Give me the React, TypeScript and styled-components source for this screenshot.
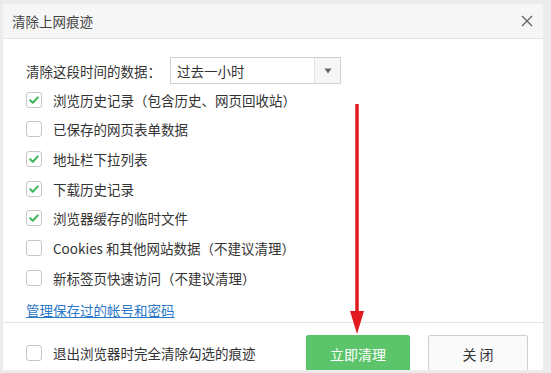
import React, { useState } from 'react';
import styled, { createGlobalStyle } from 'styled-components';

const GlobalStyle = createGlobalStyle`
    html, body {
        margin: 0;
        padding: 0;
        background: #ececec;
    }
    body {
        font-family: 'Noto Sans CJK SC', 'Noto Sans', sans-serif;
        color: #333;
    }
`;

interface Option {
    id: string;
    label: string;
    checked: boolean;
}

const initialOptions: Option[] = [
    { id: 'history', label: '浏览历史记录（包含历史、网页回收站）', checked: true },
    { id: 'forms', label: '已保存的网页表单数据', checked: false },
    { id: 'address', label: '地址栏下拉列表', checked: true },
    { id: 'downloads', label: '下载历史记录', checked: true },
    { id: 'cache', label: '浏览器缓存的临时文件', checked: true },
    { id: 'cookies', label: 'Cookies 和其他网站数据（不建议清理）', checked: false },
    { id: 'newtab', label: '新标签页快速访问（不建议清理）', checked: false },
];

function CheckBox({ checked, onClick }: { checked: boolean; onClick: () => void }) {
    return (
        <Box onClick={onClick}>
            {checked && (
                <svg width="12" height="12" viewBox="0 0 12 12">
                    <path d="M2.2 6.2 L4.8 8.7 L9.8 3.4" fill="none" stroke="#3db55a" strokeWidth="2" strokeLinecap="round" strokeLinejoin="round" />
                </svg>
            )}
        </Box>
    );
}

export default function App() {
    const [options, setOptions] = useState<Option[]>(initialOptions);
    const [clearOnExit, setClearOnExit] = useState(false);

    const toggle = (id: string) => {
        setOptions(options.map((o) => (o.id === id ? { ...o, checked: !o.checked } : o)));
    };

    return (
        <Page>
            <GlobalStyle />
            <Dialog>
                <TitleBar>
                    <Title>清除上网痕迹</Title>
                    <CloseIcon width="12" height="12" viewBox="0 0 12 12">
                        <path d="M1 1 L11 11 M11 1 L1 11" stroke="#666" strokeWidth="1.4" />
                    </CloseIcon>
                </TitleBar>
                <Body>
                    <RangeRow>
                        <RangeLabel>清除这段时间的数据：</RangeLabel>
                        <Select>
                            <SelectValue>过去一小时</SelectValue>
                            <SelectArrow>
                                <svg width="8" height="6" viewBox="0 0 8 6">
                                    <path d="M0.5 0.5 L7.5 0.5 L4 5.5 Z" fill="#666" />
                                </svg>
                            </SelectArrow>
                        </Select>
                    </RangeRow>
                    <OptionList>
                        {options.map((o) => (
                            <OptionRow key={o.id}>
                                <CheckBox checked={o.checked} onClick={() => toggle(o.id)} />
                                <OptionLabel>{o.label}</OptionLabel>
                            </OptionRow>
                        ))}
                    </OptionList>
                    <ManageLink>管理保存过的帐号和密码</ManageLink>
                </Body>
                <Footer>
                    <ExitRow>
                        <CheckBox checked={clearOnExit} onClick={() => setClearOnExit(!clearOnExit)} />
                        <OptionLabel>退出浏览器时完全清除勾选的痕迹</OptionLabel>
                    </ExitRow>
                    <Buttons>
                        <Button primary>立即清理</Button>
                        <Button>关 闭</Button>
                    </Buttons>
                </Footer>
            </Dialog>
            <Arrow width="16" height="234" viewBox="0 0 16 234">
                <line x1="8" y1="2" x2="8" y2="212" stroke="#e11b1f" strokeWidth="3.5" />
                <polygon points="1,209 15,209 8,232" fill="#e11b1f" />
            </Arrow>
        </Page>
    );
}

const Page = styled.div`
    position: relative;
    width: 551px;
    height: 373px;
    padding: 4px 0 0 3px;
    box-sizing: border-box;
    overflow: hidden;
`;

const Dialog = styled.div`
    width: 540px;
    height: 366px;
    background: #fff;
    display: flex;
    flex-direction: column;
    overflow: hidden;
`;

const TitleBar = styled.div`
    height: 34px;
    flex: none;
    display: flex;
    align-items: center;
    justify-content: space-between;
    padding: 0 10px 0 9px;
    background: #f6f6f6;
    border-bottom: 1px solid #e4e4e4;
`;

const Title = styled.div`
    font-size: 13.5px;
    color: #444;
`;

const CloseIcon = styled.svg`
    display: block;
`;

const Body = styled.div`
    padding: 18px 0 0 23px;
    display: flex;
    flex-direction: column;
    border-bottom: 1px solid #e4e4e4;
`;

const RangeRow = styled.div`
    display: flex;
    align-items: center;
    height: 27px;
`;

const RangeLabel = styled.div`
    font-size: 13.5px;
    width: 144px;
    white-space: nowrap;
`;

const Select = styled.div`
    width: 171px;
    height: 27px;
    box-sizing: border-box;
    border: 1px solid #d0d0d0;
    display: flex;
    align-items: stretch;
`;

const SelectValue = styled.div`
    flex: 1;
    display: flex;
    align-items: center;
    padding-left: 6px;
    font-size: 13.5px;
`;

const SelectArrow = styled.div`
    width: 25px;
    display: flex;
    align-items: center;
    justify-content: center;
    background: #f6f6f6;
    border-left: 1px solid #e2e2e2;
`;

const OptionList = styled.div`
    display: flex;
    flex-direction: column;
    margin-top: 1px;
`;

const OptionRow = styled.div`
    display: flex;
    align-items: center;
    height: 29.67px;
    gap: 11px;
`;

const Box = styled.div`
    width: 16px;
    height: 16px;
    box-sizing: border-box;
    border: 1px solid #c6c6c6;
    border-radius: 3px;
    background: #fff;
    display: flex;
    align-items: center;
    justify-content: center;
    flex: none;
`;

const OptionLabel = styled.div`
    font-size: 13.5px;
    white-space: nowrap;
    color: #333;
`;

const ManageLink = styled.a`
    font-size: 13.5px;
    color: #2a78c8;
    text-decoration: underline;
    line-height: 20px;
    margin-top: 7px;
    margin-bottom: 2px;
    align-self: flex-start;
    cursor: pointer;
`;

const Footer = styled.div`
    flex: 1;
    display: flex;
    justify-content: space-between;
    align-items: flex-start;
    padding: 0 15px 0 23px;
`;

const ExitRow = styled.div`
    display: flex;
    align-items: center;
    gap: 11px;
    height: 30px;
    margin-top: 15px;
`;

const Buttons = styled.div`
    display: flex;
    gap: 18px;
    margin-top: 12px;
`;

const Button = styled.button<{ primary?: boolean }>`
    width: ${(p) => (p.primary ? '104px' : '100px')};
    height: 38px;
    border-radius: 2px;
    font-family: 'Noto Sans CJK SC', sans-serif;
    font-size: 14px;
    cursor: pointer;
    border: 1px solid ${(p) => (p.primary ? '#5cc36a' : '#cfcfcf')};
    background: ${(p) => (p.primary ? '#5cc56b' : '#fafafa')};
    color: ${(p) => (p.primary ? '#fff' : '#333')};
`;

const Arrow = styled.svg`
    position: absolute;
    left: 349px;
    top: 102px;
`;
